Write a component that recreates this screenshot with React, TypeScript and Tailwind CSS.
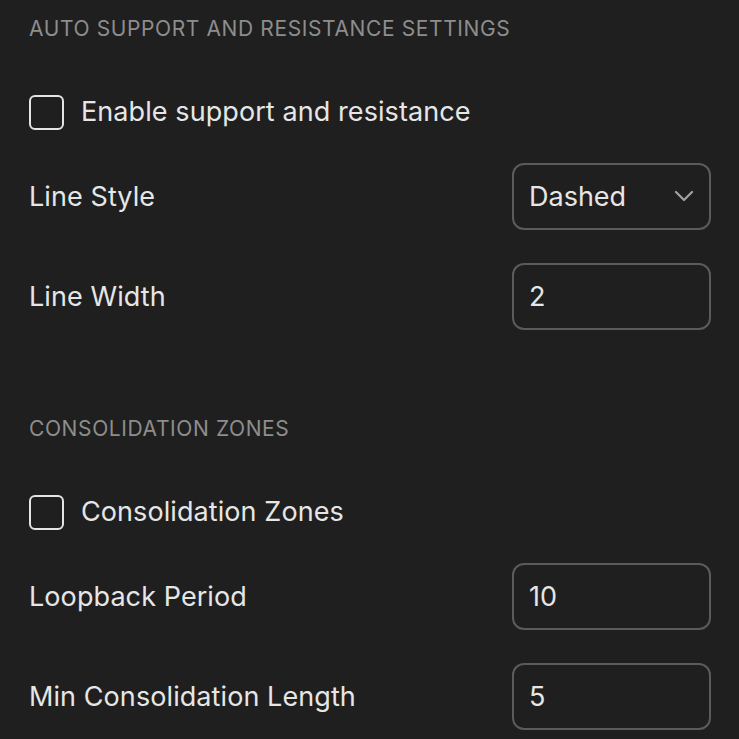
import { useState } from "react";

// Simple settings panel: auto S/R + consolidation zones

const font = { fontFamily: "Inter, 'Noto Sans', sans-serif" };

const SectionTitle = ({ title, className = "" }: { title: string; className?: string }) => (
    <div className={`h-[56px] flex items-center pt-[1px] text-[21px] tracking-[0.029em] text-[#8d8d8d] ${className}`}>
        {title}
    </div>
);

const CheckRow = ({ label, checked, onToggle }: { label: string; checked: boolean; onToggle: () => void }) => (
    <label className="mt-[22px] h-[68px] flex items-center gap-[17px] cursor-pointer">
        <span
            onClick={onToggle}
            className="w-[35px] h-[35px] shrink-0 rounded-[6px] border-2 border-[#e4e4e4] flex items-center justify-center"
        >
            {checked && (
                <svg viewBox="0 0 24 24" className="w-6 h-6" fill="none" stroke="#e4e4e4" strokeWidth={2.5}>
                    <path d="M5 12l5 5 9-10" strokeLinecap="round" strokeLinejoin="round" />
                </svg>
            )}
        </span>
        <span className="pt-[1px] text-[27px] tracking-[0.003em] text-[#e6e6e6]">{label}</span>
    </label>
);

const FieldRow = ({ label, children, className = "" }: { label: string; children: React.ReactNode; className?: string }) => (
    <div className={`h-[66px] flex items-center justify-between ${className}`}>
        <span className="pt-[3px] text-[27px] tracking-[0.003em] text-[#e6e6e6]">{label}</span>
        {children}
    </div>
);

const NumberBox = ({ value }: { value: string }) => (
    <div className="w-[199px] h-[67px] rounded-[12px] border-2 border-[#5b5b5b] flex items-center px-[15px] pt-[2px] text-[27px] text-[#e6e6e6]">
        {value}
    </div>
);

export default function App() {
    const [enableSR, setEnableSR] = useState(false);
    const [zones, setZones] = useState(false);

    return (
        <main className="min-h-screen bg-[#1f1f1f] pl-[29px] pr-[28px] flex flex-col" style={font}>
            <SectionTitle title="AUTO SUPPORT AND RESISTANCE SETTINGS" />
            <CheckRow label="Enable support and resistance" checked={enableSR} onToggle={() => setEnableSR(!enableSR)} />

            <FieldRow label="Line Style" className="mt-[17px]">
                <div className="w-[199px] h-[67px] rounded-[12px] border-2 border-[#5b5b5b] flex items-center justify-between pl-[15px] pr-[15px] text-[27px] text-[#e6e6e6]">
                    <span className="pt-[2px]">Dashed</span>
                    <svg viewBox="0 0 20 12" className="w-[20px] h-[12px]" fill="none" stroke="#a3a3a3" strokeWidth={2.2}>
                        <path d="M2 2l8 8 8-8" strokeLinecap="round" strokeLinejoin="round" />
                    </svg>
                </div>
            </FieldRow>

            <FieldRow label="Line Width" className="mt-[34px]">
                <NumberBox value="2" />
            </FieldRow>

            <SectionTitle title="CONSOLIDATION ZONES" className="mt-[71px]" />
            <CheckRow label="Consolidation Zones" checked={zones} onToggle={() => setZones(!zones)} />

            <FieldRow label="Loopback Period" className="mt-[17px]">
                <NumberBox value="10" />
            </FieldRow>

            <FieldRow label="Min Consolidation Length" className="mt-[34px]">
                <NumberBox value="5" />
            </FieldRow>
        </main>
    );
}
